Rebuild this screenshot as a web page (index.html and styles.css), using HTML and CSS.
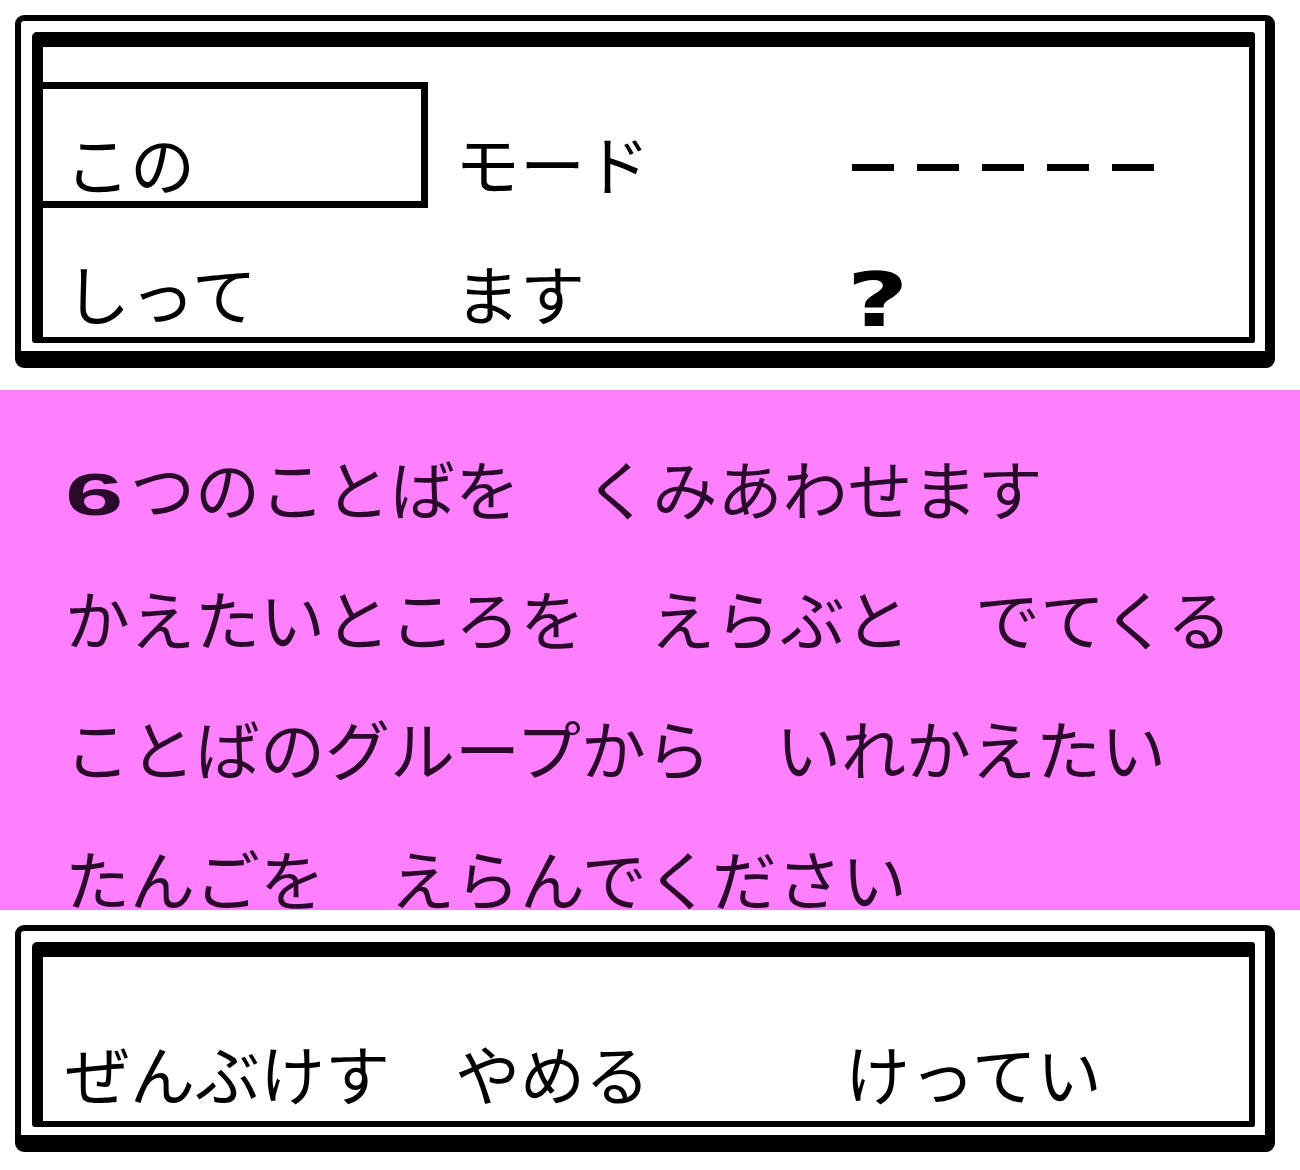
FILE: index.html
```html
<!DOCTYPE html>
<html lang="ja">
<head>
<meta charset="utf-8">
<title>かいわ</title>
<link rel="stylesheet" href="styles.css">
</head>
<body>
<div class="screen">
  <section class="panel panel-top">
    <div class="frame">
      <div class="frame-inner">
        <div class="top-content">
          <div class="row row-first">
            <div class="cell cell-selected">この</div>
            <div class="cell">モード</div>
            <div class="cell dashes">
              <span class="dash"></span><span class="dash"></span><span class="dash"></span><span class="dash"></span><span class="dash"></span>
            </div>
          </div>
          <div class="row row-second">
            <div class="cell cell-first">しって</div>
            <div class="cell">ます</div>
            <div class="cell"><span class="qmark">?</span></div>
          </div>
        </div>
      </div>
    </div>
  </section>

  <section class="message">
    <div class="line"><span class="digit">6</span>つのことばを　くみあわせます</div>
    <div class="line">かえたいところを　えらぶと　でてくる</div>
    <div class="line">ことばのグループから　いれかえたい</div>
    <div class="line">たんごを　えらんでください</div>
  </section>

  <section class="panel panel-bottom">
    <div class="frame">
      <div class="frame-inner">
        <div class="bottom-content">
          <div class="row">
            <div class="cell cell-first">ぜんぶけす</div>
            <div class="cell">やめる</div>
            <div class="cell">けってい</div>
          </div>
        </div>
      </div>
    </div>
  </section>
</div>
</body>
</html>
```

FILE: styles.css
```css
html, body {
  margin: 0;
  padding: 0;
  background: #ffffff;
}

body {
  font-family: "Noto Sans CJK JP", "Noto Sans", sans-serif;
  color: #000000;
}

.screen {
  width: 1300px;
  height: 1170px;
  display: flex;
  flex-direction: column;
  overflow: hidden;
}

.panel {
  box-sizing: border-box;
  background: #ffffff;
}

.panel-top {
  height: 390px;
  padding: 15px 25px 22px 15px;
}

.panel-bottom {
  height: 260px;
  padding: 15px 25px 18px 15px;
}

.frame {
  box-sizing: border-box;
  height: 100%;
  border: solid #000000;
  border-width: 6px 10px 17px 6px;
  border-radius: 9px;
  padding: 11px 10px 8px 11px;
}

.frame-inner {
  box-sizing: border-box;
  height: 100%;
  border: solid #000000;
  border-width: 15px 6px 6px 11px;
  border-radius: 5px 3px 2px 3px;
}

.row {
  display: grid;
  grid-template-columns: 412px 390px 390px;
  font-size: 65px;
  line-height: 65px;
  white-space: nowrap;
}

.top-content {
  padding-top: 35px;
}

.row-first .cell {
  box-sizing: border-box;
  height: 126px;
  padding-top: 48px;
}

.row-first .cell-selected {
  width: 385px;
  border: 7px solid #000000;
  border-left: 0;
  padding-top: 41px;
  padding-left: 22px;
}

.row-second {
  margin-top: 52px;
}

.cell-first {
  padding-left: 22px;
}

.row-first .dashes {
  display: flex;
  align-items: flex-start;
  gap: 23px;
  padding-top: 82px;
  padding-left: 7px;
}

.dash {
  display: block;
  width: 42px;
  height: 7px;
  background: #000000;
}

.qmark {
  display: inline-block;
  width: 65px;
  font-family: "DejaVu Sans", sans-serif;
  font-weight: 700;
  font-size: 74px;
  line-height: 65px;
  transform: scaleX(1.45);
  transform-origin: left center;
  vertical-align: -6px;
  padding-left: 1px;
}

.message {
  box-sizing: border-box;
  height: 520px;
  background: #ff80ff;
  color: #2a0a2a;
  padding: 65px 0 0 65px;
  display: flex;
  flex-direction: column;
  gap: 65px;
}

.line {
  height: 65px;
  font-size: 65px;
  line-height: 65px;
  white-space: nowrap;
}

.digit {
  display: inline-block;
  width: 65px;
  font-family: "Liberation Sans", sans-serif;
  font-weight: 700;
  font-size: 60px;
  line-height: 65px;
  transform: scaleX(1.75);
  transform-origin: left center;
}

.bottom-content {
  padding-top: 83px;
}
```
